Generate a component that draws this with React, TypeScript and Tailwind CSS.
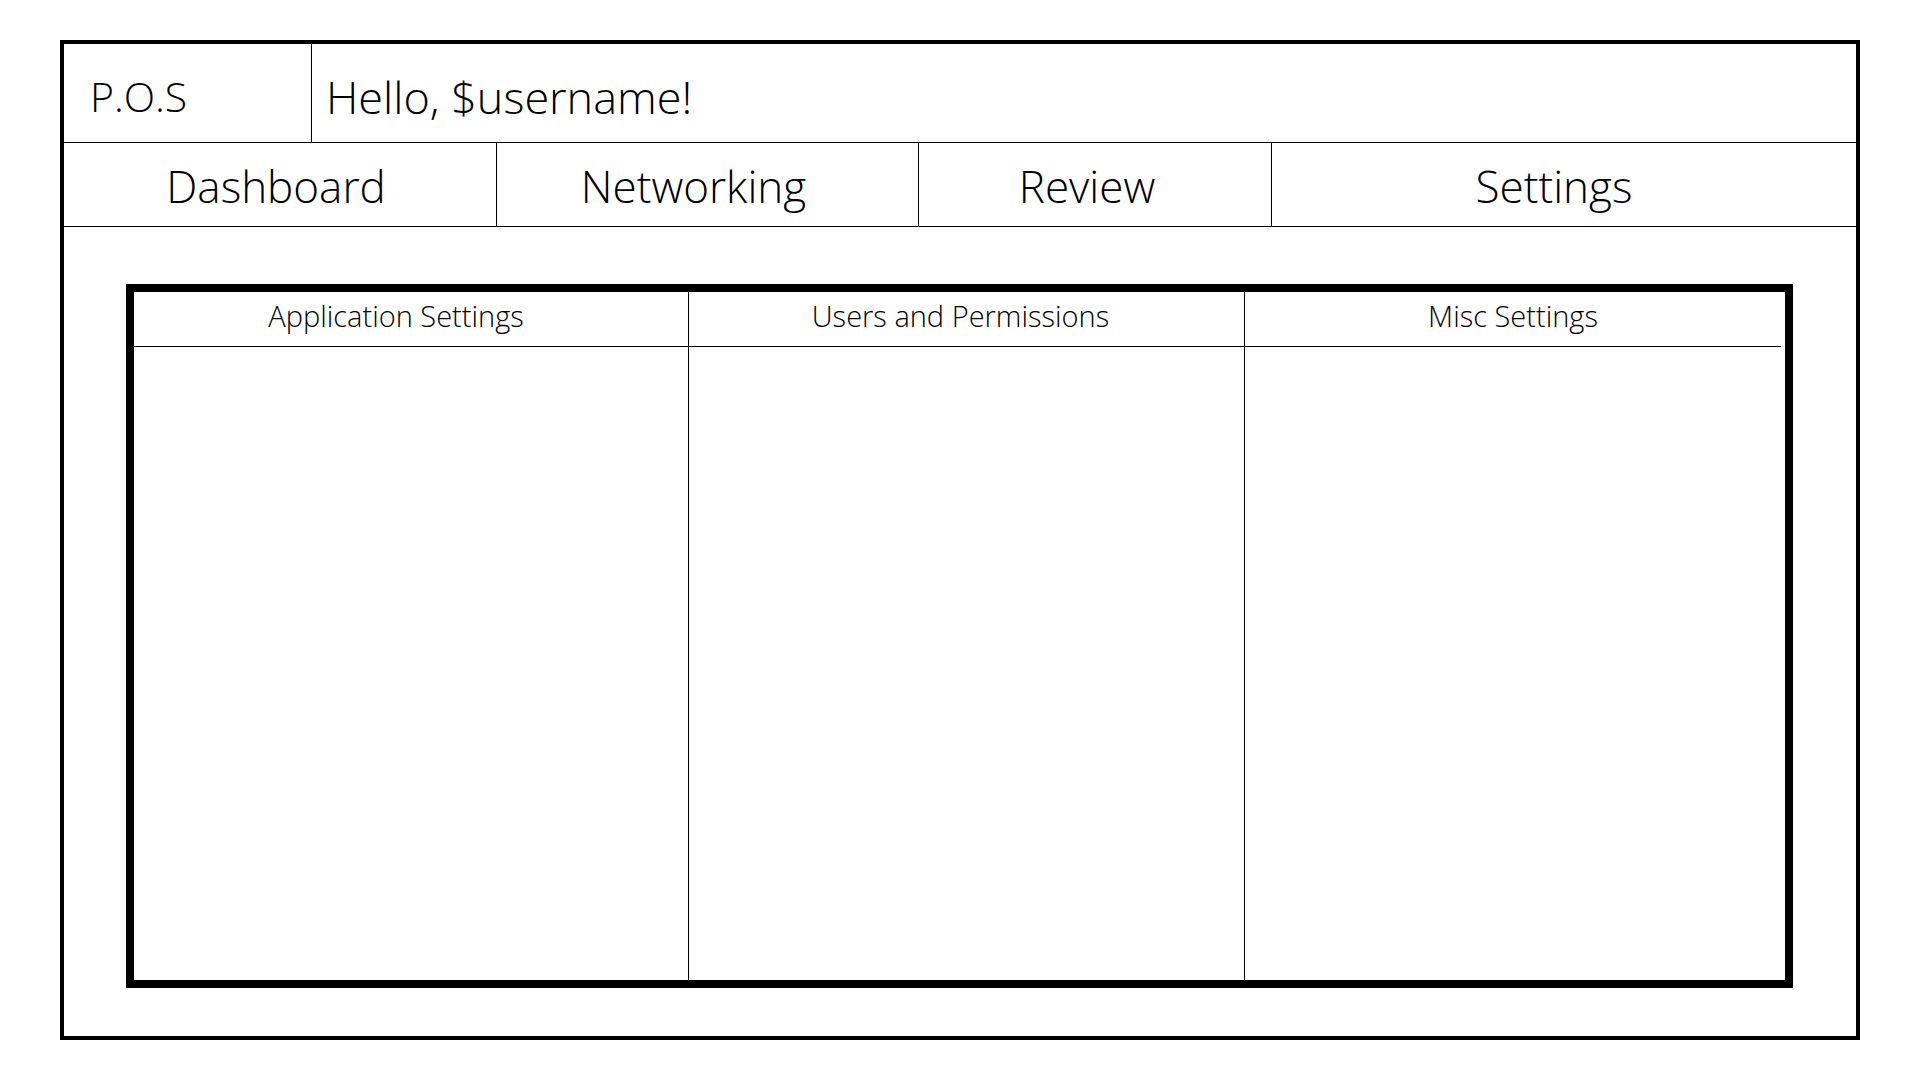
export default function App() {
  const font = { fontFamily: "'Open Sans', Lato, 'Liberation Sans', sans-serif" };
  return (
    <div className="w-[1920px] h-[1080px] bg-white pt-[40px] pl-[60px]" style={font}>
      <div className="w-[1800px] h-[1000px] border-4 border-black flex flex-col text-black">
        <div className="h-[99px] flex border-b border-black">
          <div className="w-[248px] border-r border-black flex items-center pl-[26px] pt-[8px] text-[41px] font-light">
            P.O.S
          </div>
          <div className="flex-1 flex items-center pl-[14px] pt-[8px] text-[45px] font-light">
            Hello, $username!
          </div>
        </div>
        <div className="h-[84px] flex border-b border-black text-[44px] font-light">
          <div className="w-[433px] border-r border-black flex items-center justify-center pt-[2px] pr-[8px]">Dashboard</div>
          <div className="w-[422px] border-r border-black flex items-center justify-center pt-[2px] pr-[28px]">Networking</div>
          <div className="w-[353px] border-r border-black flex items-center justify-center pt-[2px] pr-[16px]">Review</div>
          <div className="flex-1 flex items-center justify-center pt-[2px] pr-[20px]">Settings</div>
        </div>
        <div className="flex-1 pt-[57px] pl-[62px]">
          <div className="w-[1667px] h-[704px] border-8 border-black flex">
            <div className="w-[555px] border-r border-black flex flex-col">
              <div className="h-[55px] border-b border-black flex items-center justify-center pb-[6px] pr-[30px] text-[29px] font-light">
                Application Settings
              </div>
              <div className="flex-1" />
            </div>
            <div className="w-[556px] border-r border-black flex flex-col">
              <div className="h-[55px] border-b border-black flex items-center justify-center pb-[6px] pr-[12px] text-[29px] font-light">
                Users and Permissions
              </div>
              <div className="flex-1" />
            </div>
            <div className="flex-1 flex flex-col">
              <div className="h-[55px] border-b border-black flex items-center justify-center pb-[6px] text-[29px] font-light mr-[4px]">
                Misc Settings
              </div>
              <div className="flex-1" />
            </div>
          </div>
        </div>
      </div>
    </div>
  );
}
